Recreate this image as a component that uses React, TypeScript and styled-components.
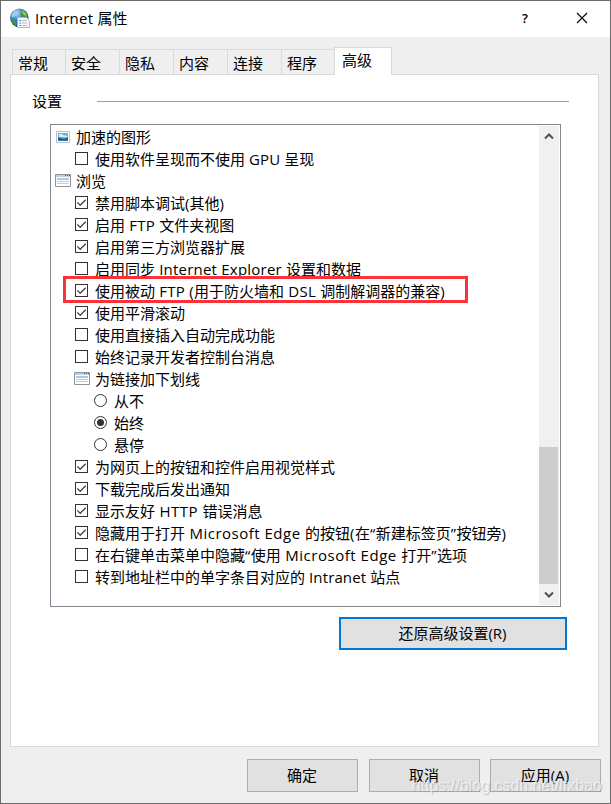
import React from "react";
import styled, { createGlobalStyle, css } from "styled-components";

const GlobalStyle = createGlobalStyle`
  * { box-sizing: border-box; }
  body { margin: 0; background: #efefef; }
  svg { display: block; flex: none; }
`;

const Window = styled.div`
  position: relative;
  width: 611px;
  height: 804px;
  overflow: hidden;
  display: flex;
  flex-direction: column;
  background: #efefef;
  border: 1px solid #6b6b6b;
  color: #000;
  font: 15px/22px "Open Sans", "Noto Sans CJK SC", sans-serif;
  white-space: pre;
`;

const TitleBar = styled.header`
  display: flex;
  align-items: center;
  height: 36px;
  flex: none;
  background: #fff;
  padding: 0 22px 2px 8px;
`;

const Title = styled.h1`
  margin: 0 auto 0 5px;
  font: inherit;
`;

const HelpButton = styled.button`
  width: 20px;
  height: 24px;
  margin: 0 41px 0 0;
  padding: 0;
  border: 0;
  background: none;
  font: 600 13px/24px "Open Sans", sans-serif;
  color: #000;
`;

const CloseButton = styled.button`
  padding: 0;
  border: 0;
  background: none;
`;

const TabStrip = styled.nav`
  display: flex;
  align-items: flex-end;
  height: 37px;
  flex: none;
  padding-left: 11px;
`;

const Tab = styled.button<{ $active?: boolean }>`
  width: ${(p) => (p.$active ? 58 : 54)}px;
  height: 25px;
  padding: 1px 0 0 5px;
  border: solid #d9d9d9;
  border-width: 1px 0 0 1px;
  background: #efefef;
  color: #000;
  font: inherit;
  line-height: 24px;
  text-align: left;
  &:first-child { width: 53px; padding-left: 5px; }
  ${(p) =>
    p.$active &&
    css`
      position: relative;
      z-index: 1;
      height: 28px;
      margin: 0 0 -1px -1px;
      padding: 0 0 4px 7px;
      border-width: 1px 1px 0 1px;
      background: #fff;
    `}
`;

const Panel = styled.main`
  width: 589px;
  height: 673px;
  flex: none;
  margin-left: 9px;
  border: 1px solid #d9d9d9;
  background: #fff;
  display: flex;
  flex-direction: column;
`;

const GroupHeading = styled.div`
  display: flex;
  align-items: center;
  height: 22px;
  margin: 15px 29px 0 21px;
  &::after {
    content: "";
    width: 472px;
    height: 1px;
    margin-left: auto;
    background: #a0a0a0;
  }
`;

const ListBox = styled.section`
  display: flex;
  width: 511px;
  height: 483px;
  flex: none;
  margin: 12px 0 0 39px;
  border: 1px solid #828790;
`;

const Options = styled.ul`
  flex: 1;
  margin: 0;
  padding: 1px 0 0;
  list-style: none;
`;

const Option = styled.li<{ $indent: number }>`
  display: flex;
  align-items: center;
  height: 22px;
  padding-left: ${(p) => 4 + p.$indent * 19}px;
`;

const IconSlot = styled.span`
  display: flex;
  width: 21px;
  flex: none;
`;

const CheckBox = styled.span`
  display: flex;
  width: 13px;
  height: 13px;
  margin: 0 7px 1px 1px;
  flex: none;
  border: 1px solid #333;
  background: #fff;
`;

const RadioCircle = styled.span`
  display: flex;
  align-items: center;
  justify-content: center;
  width: 13px;
  height: 13px;
  margin: 0 7px 1px 1px;
  flex: none;
  border: 1px solid #333;
  border-radius: 50%;
`;

const RadioDot = styled.span`
  width: 7px;
  height: 7px;
  border-radius: 50%;
  background: #333;
`;

const Latin = styled.span<{ $track: number }>`
  letter-spacing: ${(p) => p.$track}px;
`;

const ScrollBar = styled.div`
  display: flex;
  flex-direction: column;
  align-items: center;
  justify-content: space-between;
  width: 20px;
  height: 479px;
  margin: 1px 1px 0 0;
  padding: 7px 1px 7px 0;
  background: #f0f0f0;
`;

const ScrollThumb = styled.div`
  width: 19px;
  height: 137px;
  margin: auto 0 7px 0;
  background: #cdcdcd;
`;

const PushButton = styled.button<{ $default?: boolean }>`
  width: ${(p) => (p.$default ? 228 : 111)}px;
  height: 33px;
  flex: none;
  padding: 0 1px 2px 0;
  border: ${(p) => (p.$default ? "2px solid #0078d7" : "1px solid #adadad")};
  background: #e1e1e1;
  color: #000;
  font: inherit;
`;

const RestoreRow = styled.div`
  display: flex;
  justify-content: flex-end;
  margin: 10px 31px 0 0;
`;

const Footer = styled.footer`
  display: flex;
  justify-content: flex-end;
  gap: 11px;
  padding: 12px 9px 0 0;
  & > :last-child { margin-left: -1px; }
`;

const Highlight = styled.div`
  position: absolute;
  left: 62px;
  top: 275px;
  width: 405px;
  height: 27px;
  border: 3px solid #fb3338;
`;

const Watermark = styled.div`
  position: absolute;
  right: 8px;
  bottom: 6px;
  font: 16px/22px "Liberation Sans", sans-serif;
  color: rgba(255, 255, 255, 0.65);
  text-shadow: 1px 1px 1px rgba(120, 120, 120, 0.4);
`;

const GlobeIcon = () => (
  <svg width="21" height="21" viewBox="0 0 21 21">
    <defs>
      <radialGradient id="globe" cx="35%" cy="25%" r="75%">
        <stop offset="0" stopColor="#b9e0f5" />
        <stop offset=".45" stopColor="#3f87cc" />
        <stop offset="1" stopColor="#123f86" />
      </radialGradient>
    </defs>
    <circle cx="10.300" cy="9.800" r="9.300" fill="url(#globe)" />
    <path d="M7 2.500C4 3.500 2.500 6 2.500 8.500l1.500 1 1.500-1.500 2-.5 1-2z" fill="#9fcbe6" />
    <path d="M11 1.200l3.500 1.300L18 6l1 3.500-3 .3-3.500-1.300-1-3 1.500-1.500zM2 11l3 .5 2 2 .5 4.500C5 17 2.500 14.500 2 11z" fill="#3b9a3c" />
    <path d="M13 2.300l3.500 2.800 1 2.900-2.500-1-1.500-2z" fill="#90d852" />
    <path d="M8.500 9.500h9l3 3v7h-12z" fill="#f7f8fa" stroke="#b4b7bd" />
    <path d="M10.500 12.500H12M10.500 15H12M10.500 17.500H12" stroke="#2a72b8" />
    <path d="M13 12.500h5M13 15h5M13 17.500h5" stroke="#b3bcc7" />
  </svg>
);

const CloseIcon = () => (
  <svg width="12" height="12" viewBox="0 0 12 12">
    <path d="M1 1l10 10M11 1L1 11" stroke="#000" strokeWidth="1.100" />
  </svg>
);

const PictureIcon = () => (
  <svg width="16" height="14" viewBox="0 0 16 14">
    <path d="M1.500 1.500h13v11h-13z" fill="#fff" stroke="#b8bfc9" />
    <path d="M3 3h10v8H3z" fill="#5fb1e4" />
    <path d="M4 4h3l2 1.500h3V7H4z" fill="#d8f1fa" />
    <path d="M3 7.500l3 .5 3 1 4-1.500V11H3z" fill="#176078" />
    <path d="M3 10h10v1H3z" fill="#3478a7" />
  </svg>
);

const PageIcon = () => (
  <svg width="16" height="14" viewBox="0 0 16 14">
    <path d="M.5.5h15v12H.5z" fill="#fff" stroke="#8f939b" />
    <path d="M1 1h14v2H1z" fill="#c9ccd1" />
    <path d="M10 1.500h1M12 1.500h1M14 1.500h1" stroke="#555c68" />
    <path d="M2 4h12v2H2z" fill="#a8c9ec" />
    <path d="M2 7.500h12M2 9.500h12" stroke="#cacaca" />
  </svg>
);

const CheckMark = () => (
  <svg width="11" height="11" viewBox="0 0 11 11">
    <path d="M1.300 5.400l2.900 2.900 5.500-5.600" fill="none" stroke="#444" strokeWidth="1.300" />
  </svg>
);

const Chevron = ({ up }: { up?: boolean }) => (
  <svg width="10" height="7" viewBox="0 0 10 7">
    <path d={up ? "M1 5.500l4-4 4 4" : "M1 1.500l4 4 4-4"} fill="none" stroke="#505050" strokeWidth="2" />
  </svg>
);

type Kind = "picture" | "page" | "on" | "off" | "radio" | "radioOn";

const options: { kind: Kind; text: string; indent: number; track?: number }[] = [
  { kind: "picture", text: "加速的图形", indent: 0 },
  { kind: "off", text: "使用软件呈现而不使用 GPU 呈现", indent: 1, track: 0.1 },
  { kind: "page", text: "浏览", indent: 0 },
  { kind: "on", text: "禁用脚本调试(其他)", indent: 1 },
  { kind: "on", text: "启用 FTP 文件夹视图", indent: 1, track: 0.3 },
  { kind: "on", text: "启用第三方浏览器扩展", indent: 1 },
  { kind: "off", text: "启用同步 Internet Explorer 设置和数据", indent: 1, track: 0.22 },
  { kind: "on", text: "使用被动 FTP (用于防火墙和 DSL 调制解调器的兼容)", indent: 1, track: 0.3 },
  { kind: "on", text: "使用平滑滚动", indent: 1 },
  { kind: "off", text: "使用直接插入自动完成功能", indent: 1 },
  { kind: "off", text: "始终记录开发者控制台消息", indent: 1 },
  { kind: "page", text: "为链接加下划线", indent: 1 },
  { kind: "radio", text: "从不", indent: 2 },
  { kind: "radioOn", text: "始终", indent: 2 },
  { kind: "radio", text: "悬停", indent: 2 },
  { kind: "on", text: "为网页上的按钮和控件启用视觉样式", indent: 1 },
  { kind: "on", text: "下载完成后发出通知", indent: 1 },
  { kind: "on", text: "显示友好 HTTP 错误消息", indent: 1, track: 0.5 },
  { kind: "on", text: "隐藏用于打开 Microsoft Edge 的按钮(在“新建标签页”按钮旁)", indent: 1, track: 0.5 },
  { kind: "off", text: "在右键单击菜单中隐藏“使用 Microsoft Edge 打开”选项", indent: 1, track: 0.53 },
  { kind: "off", text: "转到地址栏中的单字条目对应的 Intranet 站点", indent: 1, track: 0.12 },
];

/* Spaces out only the Latin runs of a mixed-script text. */
const MixedText = ({ text, track = 0 }: { text: string; track?: number }) => (
  <span>
    {text.split(/([\x20-\x7e“”]+)/).map((run, i) =>
      i % 2 ? <Latin key={i} $track={track}>{run}</Latin> : run,
    )}
  </span>
);

const Marker = ({ kind }: { kind: Kind }) => (
  <IconSlot>
    {kind === "picture" && <PictureIcon />}
    {kind === "page" && <PageIcon />}
    {(kind === "on" || kind === "off") && <CheckBox>{kind === "on" && <CheckMark />}</CheckBox>}
    {(kind === "radio" || kind === "radioOn") && (
      <RadioCircle>{kind === "radioOn" && <RadioDot />}</RadioCircle>
    )}
  </IconSlot>
);

export default function App() {
  return (
    <>
      <GlobalStyle />
      <Window>
        <TitleBar>
          <GlobeIcon />
          <Title><MixedText text="Internet 属性" track={0.25} /></Title>
          <HelpButton>?</HelpButton>
          <CloseButton aria-label="关闭"><CloseIcon /></CloseButton>
        </TitleBar>
        <TabStrip>
          {["常规", "安全", "隐私", "内容", "连接", "程序"].map((t) => <Tab key={t}>{t}</Tab>)}
          <Tab $active>高级</Tab>
        </TabStrip>
        <Panel>
          <GroupHeading>设置</GroupHeading>
          <ListBox>
            <Options>
              {options.map((o) => (
                <Option key={o.text} $indent={o.indent}>
                  <Marker kind={o.kind} />
                  <MixedText text={o.text} track={o.track} />
                </Option>
              ))}
            </Options>
            <ScrollBar>
              <Chevron up />
              <ScrollThumb />
              <Chevron />
            </ScrollBar>
          </ListBox>
          <RestoreRow>
            <PushButton $default>还原高级设置(R)</PushButton>
          </RestoreRow>
        </Panel>
        <Footer>
          <PushButton>确定</PushButton>
          <PushButton>取消</PushButton>
          <PushButton>应用(A)</PushButton>
        </Footer>
        <Highlight />
        <Watermark>https://blog.csdn.net/lfxbao</Watermark>
      </Window>
    </>
  );
}
